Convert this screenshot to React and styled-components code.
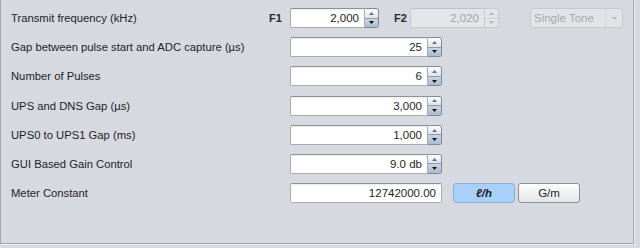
import React from "react";
import styled, { createGlobalStyle, css } from "styled-components";

const Global = createGlobalStyle`
  html, body { margin: 0; padding: 0; background: #d6d9df; }
  body { width: 640px; height: 248px; overflow: hidden; font-family: "Liberation Sans", Arial, sans-serif; }
`;

const Panel = styled.div`
  box-sizing: border-box;
  width: 634px;
  height: 244px;
  border-left: 1px solid #a3a7ad;
  border-right: 1px solid #a3a7ad;
  border-bottom: 1px solid #a3a7ad;
  box-shadow: 1px 1px 0 #eceef1;
  padding: 8px 0 0 10px;
  display: flex;
  flex-direction: column;
  gap: 9.2px;
`;

const Row = styled.div`
  display: flex;
  align-items: center;
  height: 20px;
`;

const Label = styled.div`
  width: 258px;
  font-size: 11.25px;
  color: #1e1e1e;
  white-space: nowrap;
`;

const Tag = styled.div`
  width: ${(p) => p.$w}px;
  font-size: 11px;
  font-weight: bold;
  color: #2a2a2a;
  white-space: nowrap;
`;

const Field = styled.div`
  display: flex;
  width: ${(p) => p.$w}px;
  height: 20px;
  margin-left: ${(p) => p.$ml || 0}px;
`;

const Box = styled.div`
  box-sizing: border-box;
  flex: 1;
  height: 20px;
  border: 1px solid ${(p) => (p.$disabled ? "#c6c9ce" : "#a9abae")};
  border-top-color: ${(p) => (p.$disabled ? "#bfc2c7" : "#8f9296")};
  border-radius: 2px 0 0 2px;
  ${(p) => p.$full && css`border-radius: 2px;`}
  background: ${(p) => (p.$disabled ? "#e3e5e9" : "#ffffff")};
  box-shadow: ${(p) => (p.$disabled ? "none" : "inset 0 1px 1px rgba(0,0,0,0.08)")};
  color: ${(p) => (p.$disabled ? "#a2a4a8" : "#1e1e1e")};
  font-size: 11.5px;
  text-align: right;
  padding-right: 5px;
  line-height: 18px;
`;

const Spin = styled.div`
  box-sizing: border-box;
  width: 14px;
  height: 20px;
  display: flex;
  flex-direction: column;
  border: 1px solid ${(p) => (p.$disabled ? "#c6c9ce" : "#7e8a99")};
  border-left: none;
  border-radius: 0 3px 3px 0;
  overflow: hidden;
`;

const SpinHalf = styled.div`
  flex: 1;
  display: flex;
  align-items: center;
  justify-content: center;
  ${(p) =>
    p.$disabled
      ? css`
          background: #e3e5e9;
          &:first-child { border-bottom: 1px solid #d0d3d7; }
        `
      : p.$down
      ? css`
          background: linear-gradient(#c9d5e2, #a9bbcf);
        `
      : css`
          background: linear-gradient(#fdfdfe, #dfe4ea);
          border-bottom: 1px solid #8f9aa8;
        `}
`;

const Tri = ({ down, color }) => (
  <svg width="5" height="3" viewBox="0 0 5 3">
    <path d={down ? "M0 0H5L2.5 3Z" : "M0 3H5L2.5 0Z"} fill={color} />
  </svg>
);

const Spinner = ({ value, w, ml, disabled }) => (
  <Field $w={w} $ml={ml}>
    <Box $disabled={disabled}>{value}</Box>
    <Spin $disabled={disabled}>
      <SpinHalf $disabled={disabled}>
        <Tri color={disabled ? "#b3b6ba" : "#6b7380"} />
      </SpinHalf>
      <SpinHalf $disabled={disabled} $down>
        <Tri down color={disabled ? "#b3b6ba" : "#101010"} />
      </SpinHalf>
    </Spin>
  </Field>
);

const Combo = styled.div`
  box-sizing: border-box;
  margin-left: 31px;
  width: 93px;
  height: 20px;
  display: flex;
  border: 1px solid #c6c9ce;
  border-radius: 3px;
  background: #e1e3e7;
  color: #a6a8ac;
  font-size: 11.5px;
`;

const ComboText = styled.div`
  flex: 1;
  padding-left: 3px;
  line-height: 18px;
`;

const ComboArrow = styled.div`
  width: 16px;
  border-left: 1px solid #d3d6da;
  display: flex;
  align-items: center;
  justify-content: center;
`;

const Button = styled.div`
  box-sizing: border-box;
  width: 62px;
  height: 20px;
  margin-left: ${(p) => p.$ml}px;
  border-radius: 3px;
  font-size: 11.5px;
  text-align: center;
  line-height: 18px;
  color: #1e1e1e;
  ${(p) =>
    p.$active
      ? css`
          border: 1px solid #8fb0d6;
          background: #a9d0fb;
          font-weight: bold;
          font-style: italic;
        `
      : css`
          border: 1px solid #8d8f92;
          background: linear-gradient(#ffffff, #e4e5e7);
        `}
`;

const rows = [
  ["Gap between pulse start and ADC capture (µs)", "25"],
  ["Number of Pulses", "6"],
  ["UPS and DNS Gap (µs)", "3,000"],
  ["UPS0 to UPS1 Gap (ms)", "1,000"],
  ["GUI Based Gain Control", "9.0 db"],
];

export default function App() {
  return (
    <>
      <Global />
      <Panel>
        <Row>
          <Label>Transmit frequency (kHz)</Label>
          <Tag $w={21}>F1</Tag>
          <Spinner value="2,000" w={89} />
          <Tag $w={16} style={{ marginLeft: 15 }}>F2</Tag>
          <Spinner value="2,020" w={89} disabled />
          <Combo>
            <ComboText>Single Tone</ComboText>
            <ComboArrow>
              <Tri down color="#b3b6ba" />
            </ComboArrow>
          </Combo>
        </Row>
        {rows.map(([l, v]) => (
          <Row key={l}>
            <Label>{l}</Label>
            <Tag $w={21} />
            <Spinner value={v} w={152} />
          </Row>
        ))}
        <Row>
          <Label>Meter Constant</Label>
          <Tag $w={21} />
          <Field $w={152}>
            <Box $full>12742000.00</Box>
          </Field>
          <Button $active $ml={11}>ℓ/h</Button>
          <Button $ml={3}>G/m</Button>
        </Row>
      </Panel>
    </>
  );
}
